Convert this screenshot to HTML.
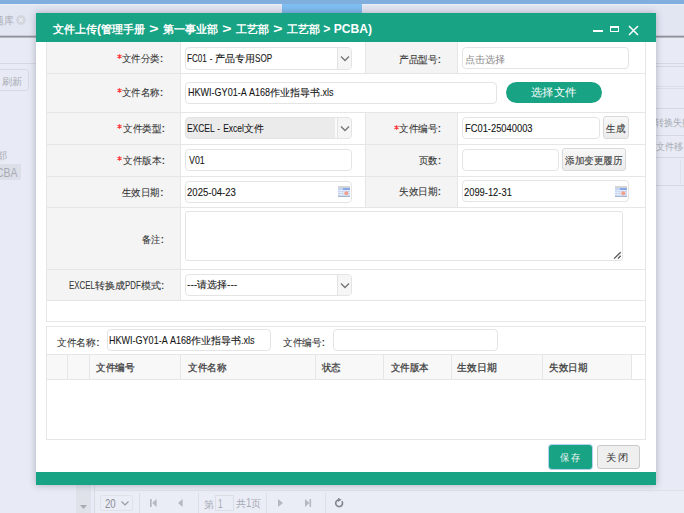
<!DOCTYPE html>
<html><head><meta charset="utf-8">
<style>
*{box-sizing:border-box;margin:0;padding:0}
html,body{width:684px;height:513px;overflow:hidden}
body{position:relative;background:#e8ebf5;font-family:"Liberation Sans",sans-serif;font-size:11px;color:#333}
.a{position:absolute}
.hl{position:absolute;height:1px;background:#d6d8e0}
.lab{position:absolute;background:#f4f4f4}
.bh{position:absolute;height:1px;background:#e6e6e6}
.bv{position:absolute;width:1px;background:#e6e6e6}
.inp{position:absolute;border:1px solid #e4e4e4;border-radius:4px;background:#fff}
.t{position:absolute;white-space:pre;line-height:16px;transform-origin:0 0;font-family:"Liberation Sans",sans-serif}.L{display:inline-block;white-space:pre;transform-origin:0 0}
.dd{position:absolute;width:1px;background:#e2e2e2}
.btn{position:absolute;border:1px solid #d9d9d9;border-radius:3px;background:linear-gradient(#f8f8f8,#ececec)}
</style></head><body>
<!-- background -->
<div class="a" style="left:0;top:0;width:684px;height:4px;background:#80afdd"></div>
<div class="a" style="left:0;top:4px;width:684px;height:32px;background:#e2e6f2"></div><div class="a" style="left:0;top:4px;width:684px;height:1px;background:#ebeef6"></div>
<div class="a" style="left:0;top:35px;width:684px;height:1px;background:#c9ccd6"></div>
<div class="a" style="left:282px;top:4px;width:80px;height:32px;background:linear-gradient(#80bff3,#76aadd)"></div>
<div class="a" style="left:0;top:36px;width:684px;height:1px;background:#8f929b"></div><div class="a" style="left:0;top:37px;width:684px;height:1px;background:#b4b7c0"></div>
<svg class="a" style="left:16px;top:15px" width="10" height="10" viewBox="0 0 10 10"><circle cx="5" cy="5" r="4.8" fill="#d3d6de"/><path d="M3.2 3.2L6.8 6.8M6.8 3.2L3.2 6.8" stroke="#eef0f5" stroke-width="1.2"/></svg>
<div class="hl" style="left:0;top:63px;width:36px"></div>
<div class="a" style="left:-4px;top:69px;width:33px;height:22px;border:1px solid #d8dae2;border-radius:3px"></div>
<div class="a" style="left:0;top:164px;width:21px;height:16px;background:#dcdfe8"></div>
<div class="hl" style="left:656px;top:63px;width:28px"></div>
<div class="hl" style="left:656px;top:66px;width:28px"></div>
<div class="hl" style="left:656px;top:86px;width:28px;background:#dcdee6"></div><div class="hl" style="left:656px;top:88px;width:28px;background:#dcdee6"></div>
<div class="hl" style="left:656px;top:108px;width:28px"></div>
<div class="hl" style="left:656px;top:135px;width:28px"></div>
<div class="hl" style="left:656px;top:157px;width:28px"></div>
<div class="a" style="left:680px;top:160px;width:1px;height:25px;background:#dfe1e9"></div>
<div class="hl" style="left:656px;top:185px;width:28px"></div>
<div class="a" style="left:76px;top:485px;width:15px;height:28px;background:#e0e2ea"></div>
<svg class="a" style="left:80px;top:505px" width="7" height="4"><path d="M0 0H7L3.5 4Z" fill="#a9abb3"/></svg>
<div class="a" style="left:94px;top:485px;width:1px;height:28px;background:#d8dae2"></div>
<div class="hl" style="left:95px;top:490px;width:589px;background:#dfe1ea"></div>
<div class="a" style="left:95px;top:491px;width:589px;height:22px;background:#eaedf6"></div>
<div class="a" style="left:100px;top:495px;width:33px;height:16px;border:1px solid #e0e2ea;border-radius:2px"></div>
<svg class="a" style="left:121px;top:501px" width="8" height="5"><path d="M0.5 0.5L4 4L7.5 0.5" fill="none" stroke="#999ba3" stroke-width="1.2"/></svg>
<div class="a" style="left:139px;top:493px;width:1px;height:20px;background:#dcdee6"></div>
<svg class="a" style="left:149.5px;top:499px" width="8" height="8" viewBox="0 0 8 8"><path d="M0 0H1.7V8H0Z M6.6 0V8L2.2 4Z" fill="#b6b8c0"/></svg>
<svg class="a" style="left:178.3px;top:499px" width="6" height="8" viewBox="0 0 6 8"><path d="M4.6 0V8L0 4Z" fill="#b6b8c0"/></svg>
<div class="a" style="left:198px;top:493px;width:1px;height:20px;background:#dcdee6"></div>
<div class="a" style="left:215px;top:495px;width:19px;height:16px;border:1px solid #dcdee6"></div>
<div class="a" style="left:266px;top:493px;width:1px;height:20px;background:#dcdee6"></div>
<svg class="a" style="left:277.8px;top:499px" width="6" height="8" viewBox="0 0 6 8"><path d="M0 0V8L5 4Z" fill="#b6b8c0"/></svg>
<svg class="a" style="left:305.3px;top:499px" width="7" height="8" viewBox="0 0 7 8"><path d="M0 0V8L4.4 4Z M4.5 0H6.1V8H4.5Z" fill="#b6b8c0"/></svg>
<div class="a" style="left:325px;top:493px;width:1px;height:20px;background:#dcdee6"></div>
<svg class="a" style="left:334px;top:498px" width="10" height="10" viewBox="0 0 10 10"><path d="M4.6 1.8A3.4 3.4 0 1 0 7.9 3.2" fill="none" stroke="#85878f" stroke-width="1.7"/><path d="M4 -0.3L7.6 1.8L4 3.9Z" fill="#85878f"/></svg>
<div class="t" style="left:-6.00px;top:12.25px;color:#a8abb4;transform:scaleX(0.9845)"><span style="font-size:10px">题库</span></div>
<div class="t" style="left:2.30px;top:73.05px;color:#a8abb4;transform:scaleX(1.0182)"><span style="font-size:10px">刷新</span></div>
<div class="t" style="left:-4.00px;top:147.25px;color:#a8abb4;transform:scaleX(1.1376)"><span style="font-size:10px">部</span></div>
<div class="t" style="left:-4.00px;top:164.50px;color:#a8abb4;transform:scaleX(1.0896)"><span class="L" style="font-size:12px;width:19.750px;transform:scaleX(0.8000)">CBA</span></div>
<div class="t" style="left:654.50px;top:114.15px;color:#a8abb4;transform:scaleX(0.9125)"><span style="font-size:10px">转换失败</span></div>
<div class="t" style="left:656.00px;top:138.45px;color:#a8abb4;transform:scaleX(0.9200)"><span style="font-size:10px">文件移</span></div>
<div class="t" style="left:105.30px;top:495.50px;color:#8a8c94;transform:scaleX(1.0000)"><span class="L" style="font-size:12px;width:10.688px;transform:scaleX(0.8000)">20</span></div>
<div class="t" style="left:204.30px;top:495.50px;color:#a8abb4;transform:scaleX(1.0000)"><span style="font-size:10px">第</span></div>
<div class="t" style="left:218.30px;top:495.50px;color:#a8abb4;transform:scaleX(0.8625)"><span class="L" style="font-size:12px;width:5.350px;transform:scaleX(0.8000)">1</span></div>
<div class="t" style="left:235.80px;top:495.00px;color:#a8abb4;transform:scaleX(0.9984)"><span style="font-size:10px">共</span><span class="L" style="font-size:12px;width:5.350px;transform:scaleX(0.8000)">1</span><span style="font-size:10px">页</span></div>
<!-- modal -->
<div class="a" style="left:36px;top:13px;width:620px;height:472px;background:#fff;box-shadow:0 0 7px rgba(40,45,70,.32)"></div>
<div class="a" style="left:36px;top:13px;width:620px;height:29px;background:#19a385"></div>
<div class="a" style="left:593px;top:30px;width:10px;height:2px;background:#fff"></div>
<div class="a" style="left:610px;top:26px;width:9px;height:6px;border:1px solid #fff;border-top-width:2px"></div>
<svg class="a" style="left:628px;top:25px" width="11" height="11" viewBox="0 0 11 11"><path d="M1 1L10 10M10 1L1 10" stroke="#fff" stroke-width="1.5"/></svg>
<div class="a" style="left:36px;top:472px;width:620px;height:13px;background:#19a385"></div>

<!-- form table -->
<div class="a" style="left:46px;top:42px;width:600px;height:280px;border:1px solid #e6e6e6;border-top:none;background:#fff"></div>
<div class="lab" style="left:47px;top:42px;width:133px;height:258px"></div>
<div class="lab" style="left:366px;top:42px;width:91px;height:165px"></div>
<div class="bv" style="left:180px;top:42px;height:258px"></div>
<div class="bv" style="left:365px;top:42px;height:31px"></div>
<div class="bv" style="left:365px;top:112px;height:95px"></div>
<div class="bv" style="left:457px;top:42px;height:31px"></div>
<div class="bv" style="left:457px;top:112px;height:95px"></div>
<div class="lab" style="left:181px;top:74px;width:464px;height:38px;background:#fff"></div>
<div class="bh" style="left:47px;top:73px;width:598px"></div>
<div class="bh" style="left:47px;top:112px;width:598px"></div>
<div class="bh" style="left:47px;top:144px;width:598px"></div>
<div class="bh" style="left:47px;top:176px;width:598px"></div>
<div class="bh" style="left:47px;top:207px;width:598px"></div>
<div class="bh" style="left:47px;top:269px;width:598px"></div>
<div class="bh" style="left:47px;top:300px;width:598px"></div>

<!-- inputs -->
<div class="inp" style="left:185px;top:47px;width:167px;height:23px"></div>
<div class="a" style="left:337px;top:48px;width:14px;height:21px;background:#f6f6f6;border-left:1px solid #e2e2e2;border-radius:0 3px 3px 0"></div>
<svg class="a" style="left:340px;top:55px" width="10" height="7" viewBox="0 0 10 7"><path d="M1 1.5L5 5.5L9 1.5" fill="none" stroke="#777" stroke-width="1.4"/></svg>
<div class="inp" style="left:462px;top:47px;width:167px;height:22px"></div>
<div class="inp" style="left:185px;top:82px;width:312px;height:22px"></div>
<div class="a" style="left:506px;top:82px;width:96px;height:21px;border-radius:11px;background:#19a385"></div>
<div class="inp" style="left:185px;top:117px;width:167px;height:22px;background:#ebebeb"></div>
<div class="a" style="left:335px;top:118px;width:16px;height:20px;background:#f5f5f5;border-left:2px solid #fafafa;border-radius:0 3px 3px 0"></div><div class="dd" style="left:337px;top:118px;height:20px"></div>
<svg class="a" style="left:340px;top:125px" width="10" height="7" viewBox="0 0 10 7"><path d="M1 1.5L5 5.5L9 1.5" fill="none" stroke="#777" stroke-width="1.4"/></svg>
<div class="inp" style="left:462px;top:117px;width:138px;height:22px"></div>
<div class="btn" style="left:603px;top:116px;width:26px;height:23px"></div>
<div class="inp" style="left:185px;top:149px;width:167px;height:22px"></div>
<div class="inp" style="left:462px;top:149px;width:97px;height:22px"></div>
<div class="btn" style="left:562px;top:148px;width:64px;height:23px"></div>
<div class="inp" style="left:185px;top:181px;width:167px;height:22px"></div>
<div class="inp" style="left:462px;top:180px;width:167px;height:22px"></div>
<div class="inp" style="left:185px;top:211px;width:438px;height:50px;border-radius:3px"></div>
<svg class="a" style="left:613px;top:251px" width="9" height="9" viewBox="0 0 9 9"><path d="M1.1 7.6L7.7 1.2M5 7.6L7.7 4.7" stroke="#555" stroke-width="1.3"/></svg>
<div class="inp" style="left:185px;top:274px;width:167px;height:22px"></div>
<div class="a" style="left:337px;top:275px;width:14px;height:20px;background:#f6f6f6;border-left:1px solid #e2e2e2;border-radius:0 3px 3px 0"></div>
<svg class="a" style="left:340px;top:282px" width="10" height="7" viewBox="0 0 10 7"><path d="M1 1.5L5 5.5L9 1.5" fill="none" stroke="#777" stroke-width="1.4"/></svg>
<!-- calendar icons -->
<svg class="a" style="left:338px;top:186px" width="12" height="11" viewBox="0 0 12 11"><rect x="0" y="0" width="12" height="2" fill="#d2d4d8"/><rect x="0" y="2" width="12" height="9" fill="#c4d4f0"/><rect x="5" y="2" width="7" height="2" fill="#86a8e6"/><path d="M0 4.5H12M0 6.5H12M0 8.5H12M3 4V11M6 4V11M9 4V11" stroke="#e6eefa" stroke-width="0.8"/><circle cx="8.3" cy="7.2" r="2" fill="#f2a08c"/><rect x="0" y="10" width="12" height="1" fill="#a8b6ca"/></svg>
<svg class="a" style="left:615px;top:186px" width="12" height="11" viewBox="0 0 12 11"><rect x="0" y="0" width="12" height="2" fill="#d2d4d8"/><rect x="0" y="2" width="12" height="9" fill="#c4d4f0"/><rect x="5" y="2" width="7" height="2" fill="#86a8e6"/><path d="M0 4.5H12M0 6.5H12M0 8.5H12M3 4V11M6 4V11M9 4V11" stroke="#e6eefa" stroke-width="0.8"/><circle cx="8.3" cy="7.2" r="2" fill="#f2a08c"/><rect x="0" y="10" width="12" height="1" fill="#a8b6ca"/></svg>

<!-- second panel -->
<div class="a" style="left:46px;top:326px;width:600px;height:114px;border:1px solid #e6e6e6;background:#fff"></div>
<div class="inp" style="left:107px;top:329px;width:164px;height:22px"></div>
<div class="inp" style="left:333px;top:329px;width:165px;height:22px"></div>
<div class="a" style="left:47px;top:354px;width:584px;height:26px;background:#f8f8f8;border-top:1px solid #e6e6e6;border-bottom:1px solid #e6e6e6"></div>
<div class="a" style="left:631px;top:354px;width:14px;height:26px;border-top:1px solid #e6e6e6;border-bottom:1px solid #e6e6e6"></div>
<div class="bv" style="left:67px;top:355px;height:25px"></div>
<div class="bv" style="left:89px;top:355px;height:25px"></div>
<div class="bv" style="left:180px;top:355px;height:25px"></div>
<div class="bv" style="left:315px;top:355px;height:25px"></div>
<div class="bv" style="left:383px;top:355px;height:25px"></div>
<div class="bv" style="left:451px;top:355px;height:25px"></div>
<div class="bv" style="left:542px;top:355px;height:25px"></div>
<div class="bv" style="left:631px;top:355px;height:25px"></div>

<!-- buttons -->
<div class="a" style="left:549px;top:445px;width:43px;height:24px;border-radius:3px;background:#19a385;box-shadow:0 0 0 1px #b5d3ee"></div>
<div class="btn" style="left:597px;top:445px;width:43px;height:24px;background:#efefef;border-color:#c9c9c9"></div>
<svg class="a" style="left:117.0px;top:54.0px" width="5" height="5" viewBox="0 0 5 5"><path d="M2.5 0.2V4.8M0.5 1.35L4.5 3.65M0.5 3.65L4.5 1.35" stroke="#ff3a3a" stroke-width="1.1"/></svg>
<svg class="a" style="left:117.0px;top:88.2px" width="5" height="5" viewBox="0 0 5 5"><path d="M2.5 0.2V4.8M0.5 1.35L4.5 3.65M0.5 3.65L4.5 1.35" stroke="#ff3a3a" stroke-width="1.1"/></svg>
<svg class="a" style="left:117.0px;top:123.7px" width="5" height="5" viewBox="0 0 5 5"><path d="M2.5 0.2V4.8M0.5 1.35L4.5 3.65M0.5 3.65L4.5 1.35" stroke="#ff3a3a" stroke-width="1.1"/></svg>
<svg class="a" style="left:117.0px;top:156.1px" width="5" height="5" viewBox="0 0 5 5"><path d="M2.5 0.2V4.8M0.5 1.35L4.5 3.65M0.5 3.65L4.5 1.35" stroke="#ff3a3a" stroke-width="1.1"/></svg>
<svg class="a" style="left:394.0px;top:124.5px" width="5" height="5" viewBox="0 0 5 5"><path d="M2.5 0.2V4.8M0.5 1.35L4.5 3.65M0.5 3.65L4.5 1.35" stroke="#ff3a3a" stroke-width="1.1"/></svg>
<div class="t" style="left:52.90px;top:21.05px;color:#fff;font-weight:bold;transform:scaleX(1.0000)"><span style="font-size:11.2px">文件上传</span><span class="L" style="font-size:13.5px;width:4.035px;transform:scaleX(0.8967)">(</span><span style="font-size:11.2px">管理手册</span><span class="L" style="font-size:13.5px;width:17.940px;transform:scaleX(1.1657)"> &gt; </span><span style="font-size:11.2px">第一事业部</span><span class="L" style="font-size:13.5px;width:17.940px;transform:scaleX(1.1657)"> &gt; </span><span style="font-size:11.2px">工艺部</span><span class="L" style="font-size:13.5px;width:17.940px;transform:scaleX(1.1657)"> &gt; </span><span style="font-size:11.2px">工艺部</span><span class="L" style="font-size:13.5px;width:52.133px;transform:scaleX(0.8967)"> &gt; PCBA)</span></div>
<div class="t" style="left:122.20px;top:50.30px;color:#383838;-webkit-text-stroke:0.1px #383838;transform:scaleX(0.9441)"><span style="font-size:10.1px">文件分类</span><span class="L" style="font-size:11.6px;width:3.881px;transform:scaleX(1.2000)">:</span></div>
<div class="t" style="left:122.20px;top:84.45px;color:#383838;-webkit-text-stroke:0.1px #383838;transform:scaleX(0.9441)"><span style="font-size:10.1px">文件名称</span><span class="L" style="font-size:11.6px;width:3.881px;transform:scaleX(1.2000)">:</span></div>
<div class="t" style="left:122.50px;top:120.10px;color:#383838;-webkit-text-stroke:0.1px #383838;transform:scaleX(0.9600)"><span style="font-size:10.1px">文件类型</span><span class="L" style="font-size:11.6px;width:3.881px;transform:scaleX(1.2000)">:</span></div>
<div class="t" style="left:122.50px;top:152.10px;color:#383838;-webkit-text-stroke:0.1px #383838;transform:scaleX(0.9600)"><span style="font-size:10.1px">文件版本</span><span class="L" style="font-size:11.6px;width:3.881px;transform:scaleX(1.2000)">:</span></div>
<div class="t" style="left:122.30px;top:183.70px;color:#383838;-webkit-text-stroke:0.1px #383838;transform:scaleX(0.9484)"><span style="font-size:10.1px">生效日期</span><span class="L" style="font-size:11.6px;width:3.881px;transform:scaleX(1.2000)">:</span></div>
<div class="t" style="left:141.60px;top:230.80px;color:#383838;-webkit-text-stroke:0.1px #383838;transform:scaleX(0.9300)"><span style="font-size:10.1px">备注</span><span class="L" style="font-size:11.6px;width:3.881px;transform:scaleX(1.2000)">:</span></div>
<div class="t" style="left:69.10px;top:276.90px;color:#383838;-webkit-text-stroke:0.1px #383838;transform:scaleX(1.0000)"><span class="L" style="font-size:11.6px;width:25.842px;transform:scaleX(0.6795)">EXCEL</span><span style="font-size:10.1px">转换成</span><span class="L" style="font-size:11.6px;width:15.756px;transform:scaleX(0.6795)">PDF</span><span style="font-size:10.1px">模式</span><span class="L" style="font-size:11.6px;width:3.297px;transform:scaleX(1.0193)">:</span></div>
<div class="t" style="left:399.30px;top:50.70px;color:#383838;-webkit-text-stroke:0.1px #383838;transform:scaleX(0.9600)"><span style="font-size:10.1px">产品型号</span><span class="L" style="font-size:11.6px;width:3.881px;transform:scaleX(1.2000)">:</span></div>
<div class="t" style="left:399.00px;top:120.30px;color:#383838;-webkit-text-stroke:0.1px #383838;transform:scaleX(0.9625)"><span style="font-size:10.1px">文件编号</span><span class="L" style="font-size:11.6px;width:3.881px;transform:scaleX(1.2000)">:</span></div>
<div class="t" style="left:418.50px;top:151.75px;color:#383838;-webkit-text-stroke:0.1px #383838;transform:scaleX(0.9333)"><span style="font-size:10.1px">页数</span><span class="L" style="font-size:11.6px;width:3.881px;transform:scaleX(1.2000)">:</span></div>
<div class="t" style="left:399.00px;top:183.25px;color:#383838;-webkit-text-stroke:0.1px #383838;transform:scaleX(0.9625)"><span style="font-size:10.1px">失效日期</span><span class="L" style="font-size:11.6px;width:3.881px;transform:scaleX(1.2000)">:</span></div>
<div class="t" style="left:187.00px;top:50.10px;color:#161616;-webkit-text-stroke:0.1px #161616;transform:scaleX(1.0000)"><span class="L" style="font-size:11.6px;word-spacing:1.00px;width:28.446px;transform:scaleX(0.6997)">FC01 - </span><span style="font-size:9.8px">产品专用</span><span class="L" style="font-size:11.6px;word-spacing:1.00px;width:17.131px;transform:scaleX(0.6997)">SOP</span></div>
<div class="t" style="left:465.20px;top:50.70px;color:#888;transform:scaleX(1.0144)"><span style="font-size:9.8px">点击选择</span></div>
<div class="t" style="left:188.40px;top:83.80px;color:#161616;-webkit-text-stroke:0.1px #161616;transform:scaleX(1.0000)"><span class="L" style="font-size:11.6px;word-spacing:1.00px;width:82.079px;transform:scaleX(0.7788)">HKWI-GY01-A A168</span><span style="font-size:9.8px">作业指导书</span><span class="L" style="font-size:11.6px;word-spacing:1.00px;width:13.544px;transform:scaleX(0.7788)">.xls</span></div>
<div class="t" style="left:531.00px;top:84.15px;color:#fff;transform:scaleX(1.0281)"><span style="font-size:11px">选择文件</span></div>
<div class="t" style="left:187.00px;top:120.20px;color:#161616;-webkit-text-stroke:0.1px #161616;transform:scaleX(1.0000)"><span class="L" style="font-size:11.6px;word-spacing:1.00px;width:56.786px;transform:scaleX(0.7257)">EXCEL - Excel</span><span style="font-size:9.8px">文件</span></div>
<div class="t" style="left:465.00px;top:120.05px;color:#161616;-webkit-text-stroke:0.1px #161616;transform:scaleX(1.0075)"><span class="L" style="font-size:11.6px;word-spacing:1.00px;width:67.038px;transform:scaleX(0.8000)">FC01-25040003</span></div>
<div class="t" style="left:606.30px;top:120.30px;color:#444;-webkit-text-stroke:0.15px #444;transform:scaleX(0.9504)"><span style="font-size:9.8px">生成</span></div>
<div class="t" style="left:189.10px;top:152.15px;color:#161616;-webkit-text-stroke:0.1px #161616;transform:scaleX(0.9500)"><span class="L" style="font-size:11.6px;word-spacing:1.00px;width:16.512px;transform:scaleX(0.8000)">V01</span></div>
<div class="t" style="left:565.00px;top:151.75px;color:#444;-webkit-text-stroke:0.15px #444;transform:scaleX(0.9576)"><span style="font-size:9.8px">添加变更履历</span></div>
<div class="t" style="left:187.00px;top:183.90px;color:#161616;-webkit-text-stroke:0.1px #161616;transform:scaleX(1.0308)"><span class="L" style="font-size:11.6px;word-spacing:1.00px;width:47.450px;transform:scaleX(0.8000)">2025-04-23</span></div>
<div class="t" style="left:464.20px;top:184.10px;color:#161616;-webkit-text-stroke:0.1px #161616;transform:scaleX(1.0082)"><span class="L" style="font-size:11.6px;word-spacing:1.00px;width:47.450px;transform:scaleX(0.8000)">2099-12-31</span></div>
<div class="t" style="left:186.80px;top:276.45px;color:#161616;-webkit-text-stroke:0.1px #161616;transform:scaleX(1.0000)"><span class="L" style="font-size:11.6px;word-spacing:1.00px;width:10.260px;transform:scaleX(0.8850)">---</span><span style="font-size:9.8px">请选择</span><span class="L" style="font-size:11.6px;word-spacing:1.00px;width:10.260px;transform:scaleX(0.8850)">---</span></div>
<div class="t" style="left:56.70px;top:333.60px;color:#383838;-webkit-text-stroke:0.1px #383838;transform:scaleX(0.9739)"><span style="font-size:10.1px">文件名称</span><span class="L" style="font-size:11.6px;width:3.881px;transform:scaleX(1.2000)">:</span></div>
<div class="t" style="left:109.00px;top:331.95px;color:#161616;-webkit-text-stroke:0.1px #161616;transform:scaleX(1.0000)"><span class="L" style="font-size:11.6px;word-spacing:1.00px;width:82.051px;transform:scaleX(0.7785)">HKWI-GY01-A A168</span><span style="font-size:9.8px">作业指导书</span><span class="L" style="font-size:11.6px;word-spacing:1.00px;width:13.539px;transform:scaleX(0.7785)">.xls</span></div>
<div class="t" style="left:283.00px;top:333.70px;color:#383838;-webkit-text-stroke:0.1px #383838;transform:scaleX(0.9614)"><span style="font-size:10.1px">文件编号</span><span class="L" style="font-size:11.6px;width:3.881px;transform:scaleX(1.2000)">:</span></div>
<div class="t" style="left:96.10px;top:359.10px;color:#444;-webkit-text-stroke:0.3px #444;transform:scaleX(0.9594)"><span style="font-size:9.6px">文件编号</span></div>
<div class="t" style="left:187.60px;top:359.10px;color:#444;-webkit-text-stroke:0.3px #444;transform:scaleX(0.9603)"><span style="font-size:9.6px">文件名称</span></div>
<div class="t" style="left:322.20px;top:359.10px;color:#444;-webkit-text-stroke:0.3px #444;transform:scaleX(0.9400)"><span style="font-size:9.6px">状态</span></div>
<div class="t" style="left:390.80px;top:359.10px;color:#444;-webkit-text-stroke:0.3px #444;transform:scaleX(0.9490)"><span style="font-size:9.6px">文件版本</span></div>
<div class="t" style="left:457.30px;top:359.10px;color:#444;-webkit-text-stroke:0.3px #444;transform:scaleX(0.9872)"><span style="font-size:9.6px">生效日期</span></div>
<div class="t" style="left:549.40px;top:359.10px;color:#444;-webkit-text-stroke:0.3px #444;transform:scaleX(0.9500)"><span style="font-size:9.6px">失效日期</span></div>
<div class="t" style="left:560.40px;top:448.70px;color:#eaf6f2;transform:scaleX(0.9200)"><span style="font-size:9.6px">保</span><span class="L" style="font-size:9.6px;width:2.138px;transform:scaleX(0.8000)"> </span><span style="font-size:9.6px">存</span></div>
<div class="t" style="left:606.10px;top:448.90px;color:#333;transform:scaleX(1.0231)"><span style="font-size:9.6px">关</span><span class="L" style="font-size:9.6px;width:2.138px;transform:scaleX(0.8000)"> </span><span style="font-size:9.6px">闭</span></div>
</body></html>
